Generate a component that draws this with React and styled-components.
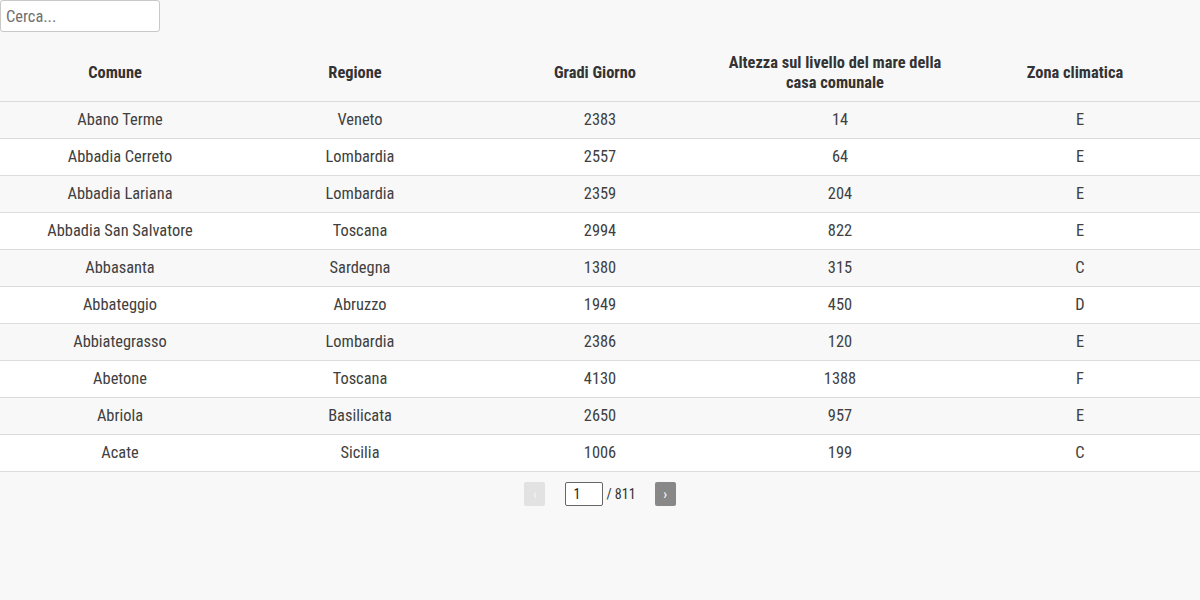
import React from "react";
import styled, { createGlobalStyle } from "styled-components";

const GlobalStyle = createGlobalStyle`
  html, body {
    margin: 0;
    padding: 0;
    background: #f8f8f8;
  }
  body {
    font-family: "Roboto Condensed", Roboto, "Liberation Sans", sans-serif;
    font-stretch: condensed;
    color: #333;
  }
  * { box-sizing: border-box; }
`;

const Page = styled.div`
  width: 1200px;
  min-height: 600px;
  background: #f8f8f8;
`;

const SearchInput = styled.input`
  display: block;
  width: 160px;
  height: 32px;
  margin: 0;
  padding: 0 5px;
  border: 1px solid #c8c8c8;
  border-radius: 3px;
  background: #fff;
  font-family: inherit;
  font-stretch: condensed;
  font-size: 16.4px;
  color: #333;
  &::placeholder { color: #707070; }
  outline: none;
`;

const Table = styled.table`
  width: 1200px;
  margin-top: 10px;
  border-collapse: collapse;
  table-layout: fixed;
`;

const HeadCell = styled.th`
  width: 240px;
  padding: 11px 10px 8px 0;
  height: 59px;
  font-size: 16.4px;
  line-height: 20px;
  font-weight: 700;
  color: #333;
  text-align: center;
  border-bottom: 1px solid #dcdcdc;
`;

const Row = styled.tr`
  background: ${(p) => (p.$odd ? "#f8f8f8" : "#ffffff")};
`;

const Cell = styled.td`
  padding: 8px 10px;
  height: 37px;
  font-size: 16.4px;
  line-height: 20px;
  font-weight: 400;
  color: #404040;
  text-align: center;
  border-bottom: 1px solid #dcdcdc;
`;

const Pager = styled.div`
  display: flex;
  justify-content: center;
  align-items: center;
  margin-top: 10px;
`;

const PageButton = styled.button`
  width: 21px;
  height: 24px;
  margin: ${(p) => (p.$side === "prev" ? "0 20px 0 0" : "0 0 0 19px")};
  padding: 0;
  border: none;
  border-radius: 2px;
  background: ${(p) => (p.disabled ? "#e2e2e2" : "#888888")};
  color: ${(p) => (p.disabled ? "#f4f4f4" : "#ffffff")};
  font-family: inherit;
  font-size: 14px;
  line-height: 24px;
  cursor: pointer;
`;

const PageInfo = styled.div`
  display: flex;
  align-items: center;
  gap: 3px;
  font-size: 14px;
  color: #333;
`;

const PageInput = styled.input`
  width: 38px;
  height: 24px;
  margin: 0;
  padding: 0 0 0 7px;
  border: 1px solid #666;
  border-radius: 2px;
  background: #fff;
  font-family: inherit;
  font-stretch: condensed;
  font-size: 14px;
  color: #222;
  outline: none;
`;

const columns = [
  "Comune",
  "Regione",
  "Gradi Giorno",
  "Altezza sul livello del mare della casa comunale",
  "Zona climatica",
];

const rows = [
  ["Abano Terme", "Veneto", "2383", "14", "E"],
  ["Abbadia Cerreto", "Lombardia", "2557", "64", "E"],
  ["Abbadia Lariana", "Lombardia", "2359", "204", "E"],
  ["Abbadia San Salvatore", "Toscana", "2994", "822", "E"],
  ["Abbasanta", "Sardegna", "1380", "315", "C"],
  ["Abbateggio", "Abruzzo", "1949", "450", "D"],
  ["Abbiategrasso", "Lombardia", "2386", "120", "E"],
  ["Abetone", "Toscana", "4130", "1388", "F"],
  ["Abriola", "Basilicata", "2650", "957", "E"],
  ["Acate", "Sicilia", "1006", "199", "C"],
];

export default function App() {
  return (
    <Page>
      <GlobalStyle />
      <SearchInput placeholder="Cerca..." />
      <Table>
        <thead>
          <tr>
            {columns.map((c) => (
              <HeadCell key={c}>{c}</HeadCell>
            ))}
          </tr>
        </thead>
        <tbody>
          {rows.map((r, i) => (
            <Row key={r[0]} $odd={i % 2 === 0}>
              {r.map((v, j) => (
                <Cell key={j}>{v}</Cell>
              ))}
            </Row>
          ))}
        </tbody>
      </Table>
      <Pager>
        <PageButton $side="prev" disabled>‹</PageButton>
        <PageInfo>
          <PageInput defaultValue="1" />
          <span>/ 811</span>
        </PageInfo>
        <PageButton $side="next">›</PageButton>
      </Pager>
    </Page>
  );
}
